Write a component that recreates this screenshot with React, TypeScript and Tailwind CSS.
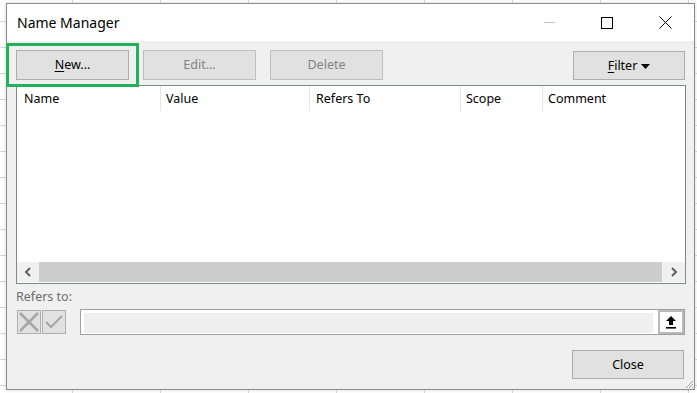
import React from "react";

const font = { fontFamily: '"Noto Sans", "Open Sans", sans-serif' };

function DlgButton({
  label,
  underline,
  disabled,
  className = "",
  children,
}: {
  label: string;
  underline?: boolean;
  disabled?: boolean;
  className?: string;
  children?: React.ReactNode;
}) {
  return (
    <button
      className={
        "flex items-center justify-center pt-px bg-[#e1e1e1] border text-[12.5px] " +
        (disabled
          ? "border-[#bfbfbf] text-[#838383] "
          : "border-[#adadad] text-black ") +
        className
      }
    >
      {underline ? (
        <span>
          <span className="underline underline-offset-2">{label[0]}</span>
          {label.slice(1)}
        </span>
      ) : (
        <span>{label}</span>
      )}
      {children}
    </button>
  );
}

export default function App() {
  const columns = [
    { name: "Name", cls: "w-[144px] pl-[7px]" },
    { name: "Value", cls: "w-[149px] pl-[5px]" },
    { name: "Refers To", cls: "w-[151px] pl-[6px]" },
    { name: "Scope", cls: "w-[82px] pl-[5px]" },
  ];

  return (
    <div
      className="w-[697px] h-[393px] overflow-hidden bg-white pt-[3px] pl-[6px] [background-image:linear-gradient(to_right,#d6d6d6_1px,transparent_1px),linear-gradient(to_bottom,#d6d6d6_1px,transparent_1px)] [background-size:88px_26px] [background-position:72px_21px]"
      style={font}
    >
      <div className="w-[689px] h-[387px] border border-[#8a8a8a] flex flex-col shadow-[0_0_4px_rgba(0,0,0,0.15)]">
        {/* title bar */}
        <div className="h-[37px] bg-white flex items-center">
          <div className="flex-1 pl-[10px] text-[14px] text-black">Name Manager</div>
          <div className="w-[58px] h-full flex items-center justify-center">
            <div className="w-[11px] h-px bg-[#c4c4c4]" />
          </div>
          <div className="w-[58px] h-full flex items-center justify-center">
            <div className="w-[12px] h-[12px] border border-black" />
          </div>
          <div className="w-[58px] h-full flex items-center justify-center">
            <svg width="13" height="13" viewBox="0 0 13 13">
              <path d="M0.5 0.5 L12.5 12.5 M12.5 0.5 L0.5 12.5" stroke="#000" strokeWidth="1" />
            </svg>
          </div>
        </div>

        {/* body */}
        <div className="relative flex-1 bg-[#f0f0f0] px-[9px] flex flex-col">
          <div className="absolute left-[-1px] top-[2px] w-[133px] h-[44px] border-[3px] border-[#21b15a]" />

          <div className="mt-[9px] h-[30px] flex items-start gap-[14px]">
            <DlgButton label="New..." underline className="w-[113px] h-[30px]" />
            <DlgButton label="Edit..." disabled className="w-[113px] h-[30px]" />
            <DlgButton label="Delete" disabled className="w-[113px] h-[30px]" />
            <DlgButton label="Filter" underline className="ml-auto mt-[1px] w-[112px] h-[29px]">
              <svg width="9" height="5" viewBox="0 0 9 5" className="ml-[4px]">
                <path d="M0 0 H9 L4.5 5 Z" fill="#000" />
              </svg>
            </DlgButton>
          </div>

          {/* list */}
          <div className="mt-[5px] mr-[-1px] h-[199px] border border-[#828790] bg-white flex flex-col pb-px">
            <div className="h-[25px] flex text-[12.5px] text-black">
              {columns.map((c) => (
                <div key={c.name} className={"h-full flex items-center pt-[2px] border-r border-[#e5e5e5] " + c.cls}>
                  {c.name}
                </div>
              ))}
              <div className="flex-1 h-full flex items-center pt-[2px] pl-[5px]">Comment</div>
            </div>
            <div className="flex-1" />
            <div className="h-[20px] flex">
              <div className="w-[22px] bg-[#f0f0f0] flex items-center justify-center">
                <svg width="8" height="10" viewBox="0 0 8 10">
                  <path d="M6 1 L2 5 L6 9" stroke="#606060" strokeWidth="2" fill="none" />
                </svg>
              </div>
              <div className="flex-1 bg-[#cdcdcd]" />
              <div className="w-[23px] bg-[#f0f0f0] flex items-center justify-center">
                <svg width="8" height="10" viewBox="0 0 8 10">
                  <path d="M2 1 L6 5 L2 9" stroke="#606060" strokeWidth="2" fill="none" />
                </svg>
              </div>
            </div>
          </div>

          <div className="mt-[4px] h-[18px] flex items-center text-[12.5px] text-[#6d6d6d]">Refers to:</div>

          <div className="mt-[3px] h-[26px] flex items-center">
            <div className="ml-px w-[24px] h-[24px] bg-[#e1e1e1] border border-[#adadad] flex items-center justify-center">
              <svg width="20" height="20" viewBox="0 0 20 20">
                <path d="M1 1 L19 19 M19 1 L1 19" stroke="#a6a6a6" strokeWidth="2.5" />
              </svg>
            </div>
            <div className="ml-px w-[24px] h-[24px] bg-[#e1e1e1] border border-[#adadad] flex items-center justify-center">
              <svg width="20" height="16" viewBox="0 0 20 16">
                <path d="M2 8 L7 13 L18 2" stroke="#a6a6a6" strokeWidth="2" fill="none" />
              </svg>
            </div>
            <div className="ml-[14px] flex-1 h-[26px] border border-[#a0a0a0] bg-white flex">
              <div className="flex-1 mt-[2px] mb-px ml-[3px] mr-[5px] bg-[#efefef] border-t border-white" />
              <div className="w-[26px] h-full border-2 border-[#b9b9b9] bg-white flex items-center justify-center">
                <svg width="12" height="14" viewBox="0 0 12 14">
                  <path d="M6 1 L11 6 H8 V10 H4 V6 H1 Z" fill="#000" />
                  <rect x="1" y="12" width="10" height="1.6" fill="#000" />
                </svg>
              </div>
            </div>
          </div>

          <div className="mt-[15px] flex justify-end mr-px">
            <DlgButton label="Close" className="w-[112px] h-[29px]" />
          </div>

          <svg width="10" height="10" viewBox="0 0 10 10" className="absolute right-0 bottom-0">
            <path d="M9 2 L2 9 M9 5 L5 9 M9 8 L8 9" stroke="#a0a0a0" strokeWidth="1" />
          </svg>
        </div>
      </div>
    </div>
  );
}
